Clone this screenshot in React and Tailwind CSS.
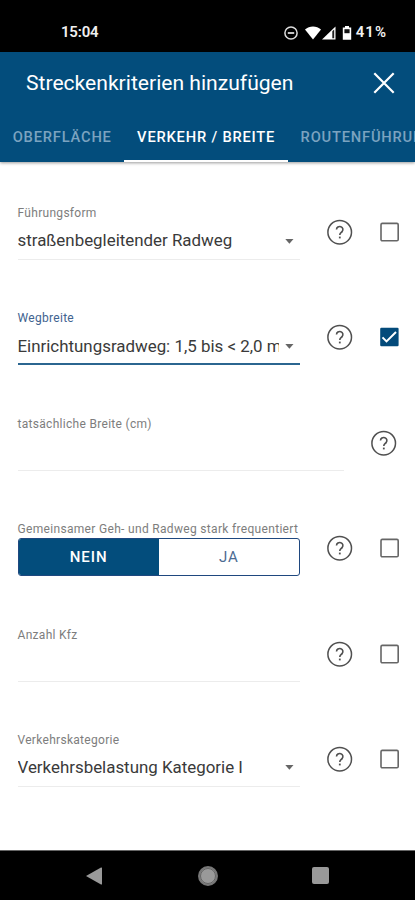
import { useState } from "react";
import clsx from "clsx";

const TABS = ["OBERFLÄCHE", "VERKEHR / BREITE", "ROUTENFÜHRUNG"];

function StatusBar() {
  return (
    <div className="flex h-[52px] shrink-0 items-center justify-between bg-black pt-[13px] pr-[28px] pl-[61px] text-[15px] font-semibold text-[#f0f0f0]">
      <span className="tracking-[-0.2px]">15:04</span>
      <div className="flex items-center">
        <svg width="14" height="14" viewBox="0 0 14 14" fill="none" stroke="#dcdcdc" strokeWidth="1.5">
          <circle cx="7" cy="7" r="6.1" />
          <path d="M3.8 7h6.4" strokeWidth="1.8" />
        </svg>
        <svg className="ml-[7px]" width="16" height="14" viewBox="0 0 16 14" fill="#fff">
          <path d="M0 3.4C4.5-.6 11.5-.6 16 3.4L8 13.4z" />
        </svg>
        <svg width="15" height="14" viewBox="0 0 15 14">
          <path d="M1 13.5 14.5.5v13z" fill="#fff" />
          <path d="M11.3 5.2 13.2 3.4v8.8h-1.9z" fill="#222" />
        </svg>
        <svg className="ml-[6px]" width="10" height="14" viewBox="0 0 10 14">
          <path d="M3 0h4v1.4h2.2v12.4H.8V1.4H3z" fill="#fff" />
          <path d="M2.4 3.2h5.2v4H2.4z" fill="#111" />
        </svg>
        <span className="ml-[3.5px] tracking-[1px]">41%</span>
      </div>
    </div>
  );
}

function Header({ activeTab, setActiveTab }) {
  return (
    <header className="flex h-[110px] shrink-0 flex-col bg-[#034d7c] text-white shadow-[0_1px_3px_rgba(0,0,0,0.4)]">
      <div className="flex h-[60px] items-center justify-between pr-5 pl-[26px]">
        <h1 className="pt-px text-[21.1px]">Streckenkriterien hinzufügen</h1>
        <button type="button" aria-label="Schließen" className="pt-px">
          <svg width="22" height="22" viewBox="0 0 22 22" fill="none" stroke="currentColor" strokeWidth="2.2">
            <path d="M1.3 1.3l19.4 19.4M20.7 1.3L1.3 20.7" />
          </svg>
        </button>
      </div>
      <nav className="flex h-[50px] overflow-hidden text-[14.7px] font-medium tracking-[0.8px] whitespace-nowrap">
        {TABS.map((tab, i) => (
          <button
            key={tab}
            type="button"
            onClick={() => setActiveTab(i)}
            className={clsx(
              "shrink-0 border-b-2 px-[12.7px] pt-[2px]",
              i === activeTab ? "border-white" : "border-transparent text-[#7ba3c0]"
            )}
          >
            {tab}
          </button>
        ))}
      </nav>
    </header>
  );
}

function HelpIcon() {
  return (
    <button type="button" aria-label="Hilfe" className="shrink-0">
      <svg width="26" height="26" viewBox="0 0 26 26" fill="none" stroke="#505050">
        <circle cx="12.7" cy="13.2" r="11.8" strokeWidth="1.5" />
        <path d="M9.500 10.500a3.200 3.100 0 1 1 5.600 2.100c-1 1.100-2.300 1.600-2.300 3.300" strokeWidth="1.6" />
        <path d="M11.900 18.500h1.800" strokeWidth="1.8" />
      </svg>
    </button>
  );
}

function Checkbox({ initial = false }) {
  const [checked, setChecked] = useState(initial);

  return (
    <button
      type="button"
      role="checkbox"
      aria-checked={checked}
      onClick={() => setChecked(!checked)}
      className="shrink-0"
    >
      <svg width="19" height="20" viewBox="0 0 19 20" fill="none">
        {checked ? (
          <>
            <rect x=".2" y=".8" width="18.4" height="18.4" rx="1.2" fill="#034a7a" />
            <path d="M2.500 10.400l4 4L16 5" stroke="#fff" strokeWidth="2" />
          </>
        ) : (
          <rect x="1" y="1.400" width="17.200" height="17.400" rx="1.300" stroke="#666" strokeWidth="1.600" />
        )}
      </svg>
    </button>
  );
}

function Row({ children, checkbox = true, checked }) {
  return (
    <div className="flex h-[105.4px] shrink-0 items-start pr-4 pl-[17.5px]">
      <div className="min-w-0 flex-1">{children}</div>
      <div className={clsx("ml-[27px] flex h-[56px] items-center gap-[27px]", !checkbox && "mr-[2px]")}>
        <HelpIcon />
        {checkbox && <Checkbox initial={checked} />}
      </div>
    </div>
  );
}

function Field({ label, value, select = false, focused = false }) {
  return (
    <div
      className={clsx(
        "flex flex-col pt-px",
        focused ? "h-[56px] border-b-2 border-[#2b6690]" : "h-[56px] border-b border-[#ececec]"
      )}
    >
      <label className={clsx("h-[17px] text-[12px] leading-[17px] tracking-[0.3px]", focused ? "text-[#41638f]" : "text-[#7d7d7d]")}>
        {label}
      </label>
      <div className="flex h-[38px] shrink-0 items-center pr-[6px]">
        <span className="flex-1 overflow-hidden text-[16.9px] whitespace-nowrap text-[#3a3a3a]">{value}</span>
        {select && (
          <svg className="ml-[6px] shrink-0" width="9" height="5" viewBox="0 0 9 5" fill="#666">
            <path d="M.3 0h8.200L4.400 4.800z" />
          </svg>
        )}
      </div>
    </div>
  );
}

function YesNoField({ label }) {
  const [value, setValue] = useState("NEIN");

  return (
    <div className="pt-px">
      <p className="h-[17px] text-[12px] leading-[17px] tracking-[0.32px] whitespace-nowrap text-[#7d7d7d]">{label}</p>
      <div className="flex h-[37.500px] overflow-hidden rounded-[3px] border border-[#1f487f] text-[15px] tracking-[0.9px]">
        {["NEIN", "JA"].map((option) => (
          <button
            key={option}
            type="button"
            onClick={() => setValue(option)}
            className={clsx("flex-1", value === option ? "bg-[#034d7c] font-medium text-white" : "text-[#4c6b92]")}
          >
            {option}
          </button>
        ))}
      </div>
    </div>
  );
}

function NavigationBar() {
  return (
    <div className="flex h-[50px] shrink-0 items-center justify-between border-t border-[#666] bg-black px-[86px]">
      <svg width="17" height="18" viewBox="0 0 17 18" fill="#999">
        <path d="M0 9 15 .5q1-.4 1 .6v15.800q0 1-1 .6z" />
      </svg>
      <svg width="20" height="20" viewBox="0 0 20 20">
        <circle cx="10" cy="10" r="9" fill="#999" stroke="#777" strokeWidth="2" />
        <circle cx="10" cy="10" r="7.500" fill="none" stroke="#555" strokeWidth=".8" />
      </svg>
      <div className="size-[17px] rounded-[2px] bg-[#999]" />
    </div>
  );
}

export default function App() {
  const [activeTab, setActiveTab] = useState(1);

  return (
    <div className="flex h-[900px] w-[415px] flex-col overflow-hidden bg-white font-['Roboto',sans-serif]">
      <StatusBar />
      <Header activeTab={activeTab} setActiveTab={setActiveTab} />
      <main className="flex min-h-0 flex-1 flex-col overflow-hidden pt-[42px]">
        <Row>
          <Field label="Führungsform" value="straßenbegleitender Radweg" select />
        </Row>
        <Row checked>
          <Field label="Wegbreite" value="Einrichtungsradweg: 1,5 bis < 2,0 m" select focused />
        </Row>
        <Row checkbox={false}>
          <Field label="tatsächliche Breite (cm)" />
        </Row>
        <Row>
          <YesNoField label="Gemeinsamer Geh- und Radweg stark frequentiert" />
        </Row>
        <Row>
          <Field label="Anzahl Kfz" />
        </Row>
        <Row>
          <Field label="Verkehrskategorie" value="Verkehrsbelastung Kategorie I" select />
        </Row>
      </main>
      <NavigationBar />
    </div>
  );
}
